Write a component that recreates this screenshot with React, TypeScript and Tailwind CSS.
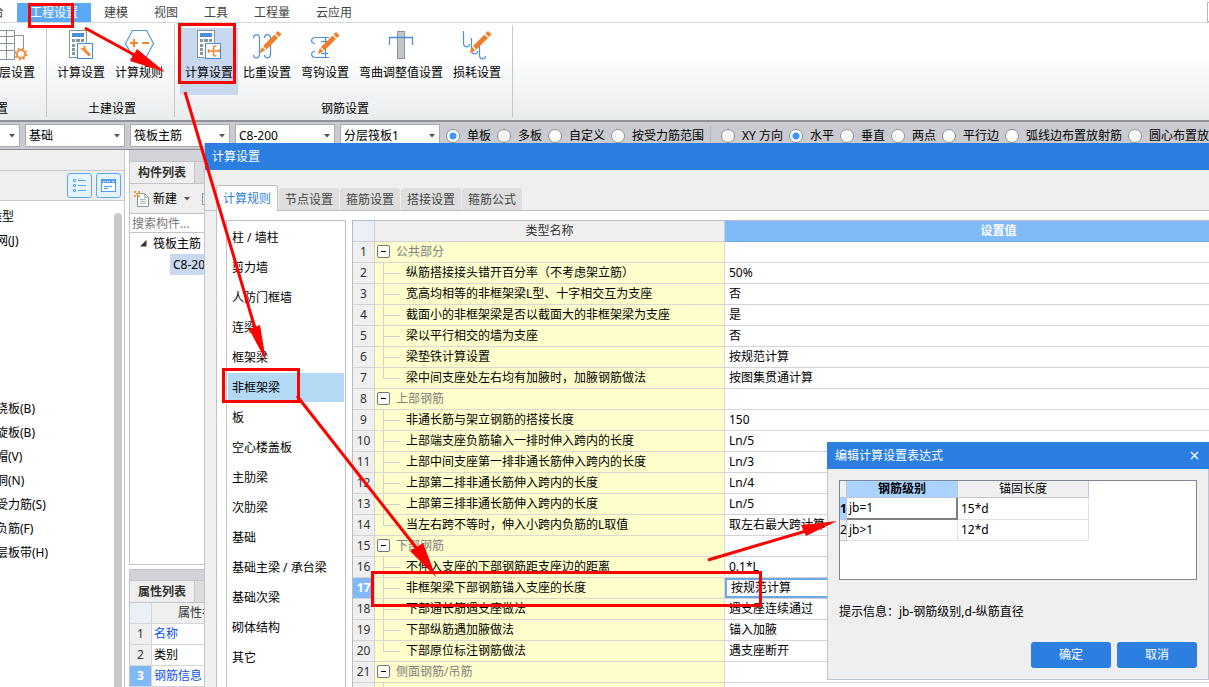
import { useState } from "react"
import type { ReactNode } from "react"

const menuTabs = ["台", "工程设置", "建模", "视图", "工具", "工程量", "云应用"]

const selects = [
  { label: "楼层", value: "基础" },
  { label: "构件类型", value: "筏板主筋" },
  { label: "构件", value: "C8-200" },
  { label: "分层", value: "分层筏板1" },
]

const rangeModes = ["单板", "多板", "自定义", "按受力筋范围"]
const layoutModes = ["XY 方向", "水平", "垂直", "两点", "平行边", "弧线边布置放射筋", "圆心布置放射筋"]

const navTop = ["网(J)"]
const navBottom = ["浇板(B)", "旋板(B)", "帽(V)", "洞(N)", "受力筋(S)", "负筋(F)", "层板带(H)"]

const dialogTabs = ["计算规则", "节点设置", "箍筋设置", "搭接设置", "箍筋公式"]

const categories = [
  "柱 / 墙柱",
  "剪力墙",
  "人防门框墙",
  "连梁",
  "框架梁",
  "非框架梁",
  "板",
  "空心楼盖板",
  "主肋梁",
  "次肋梁",
  "基础",
  "基础主梁 / 承台梁",
  "基础次梁",
  "砌体结构",
  "其它",
]

type Rule = { name: string; value?: string; group?: boolean; last?: boolean }

const rules: Rule[] = [
  { name: "公共部分", group: true },
  { name: "纵筋搭接接头错开百分率（不考虑架立筋）", value: "50%" },
  { name: "宽高均相等的非框架梁L型、十字相交互为支座", value: "否" },
  { name: "截面小的非框架梁是否以截面大的非框架梁为支座", value: "是" },
  { name: "梁以平行相交的墙为支座", value: "否" },
  { name: "梁垫铁计算设置", value: "按规范计算" },
  { name: "梁中间支座处左右均有加腋时，加腋钢筋做法", value: "按图集贯通计算", last: true },
  { name: "上部钢筋", group: true },
  { name: "非通长筋与架立钢筋的搭接长度", value: "150" },
  { name: "上部端支座负筋输入一排时伸入跨内的长度", value: "Ln/5" },
  { name: "上部中间支座第一排非通长筋伸入跨内的长度", value: "Ln/3" },
  { name: "上部第二排非通长筋伸入跨内的长度", value: "Ln/4" },
  { name: "上部第三排非通长筋伸入跨内的长度", value: "Ln/5" },
  { name: "当左右跨不等时，伸入小跨内负筋的L取值", value: "取左右最大跨计算", last: true },
  { name: "下部钢筋", group: true },
  { name: "不伸入支座的下部钢筋距支座边的距离", value: "0.1*L" },
  { name: "非框架梁下部钢筋锚入支座的长度", value: "按规范计算" },
  { name: "下部通长筋遇支座做法", value: "遇支座连续通过" },
  { name: "下部纵筋遇加腋做法", value: "锚入加腋" },
  { name: "下部原位标注钢筋做法", value: "遇支座断开", last: true },
  { name: "侧面钢筋/吊筋", group: true },
  { name: "", value: "" },
]

const EDITING_ROW = 17

function Pencil() {
  return (
    <g fill="#f07f2a">
      <path d="M12 17L23.500 5.500L27 9L15.500 20.500Z" />
      <path d="M24.500 4.500L27 2L30.500 5.500L28 8Z" />
      <path d="M11 18L14.500 21.500L8.500 24Z" />
    </g>
  )
}

function Calculator({ children }: { children: ReactNode }) {
  return (
    <svg width="32" height="32" viewBox="0 2 32 32" fill="none">
      <rect x="4.5" y="2.5" width="17" height="27" fill="#fff" stroke="#87949c" />
      <rect x="7" y="5" width="12" height="4" fill="#4a8fdc" />
      <g fill="#87949c">
        <rect x="7" y="11" width="3" height="3" />
        <rect x="11" y="11" width="4" height="3" />
        <rect x="16" y="11" width="3" height="3" />
        <rect x="7" y="16" width="3" height="3" />
        <rect x="7" y="20" width="3" height="3" />
        <rect x="7" y="24" width="3" height="3" />
      </g>
      <rect x="12.5" y="15.5" width="15" height="15" fill="#fff" stroke="#3f8fe0" />
      {children}
    </svg>
  )
}

function FloorIcon() {
  return (
    <svg width="32" height="32" viewBox="0 2 32 32" fill="none" stroke="#87949c">
      <path d="M0 2.5h15.5v29H0M0 8.5h15.5M0 15.5h15.5M0 22.5h15.5M7.5 2.5v29M15.5 7.5h9v14" fill="#fff" />
      <circle cx="22" cy="26" r="4" fill="#fff" stroke="#f0913c" strokeWidth="2" />
      <circle cx="22" cy="26" r="5.6" stroke="#f0913c" strokeWidth="1.6" strokeDasharray="2.2 2.2" />
    </svg>
  )
}

function WrenchCalcIcon() {
  return (
    <Calculator>
      <path d="M18 20.5L25 27.5" stroke="#f0862f" strokeWidth="2.6" />
      <path d="M15.2 19.5a3 3 0 0 0 5 1.800a3 3 0 0 0-1.800-4l.2 2.600-1.600.6z" fill="#f0862f" />
    </Calculator>
  )
}

function HookCalcIcon() {
  return (
    <Calculator>
      <path
        d="M15.500 21v4M15.500 23h11M26.500 21v3M23.500 18h-1a2 2 0 0 0-2 2v6a2 2 0 0 0 2 2h1"
        stroke="#f0862f"
        strokeWidth="1.5"
      />
    </Calculator>
  )
}

function HexIcon() {
  return (
    <svg width="32" height="32" viewBox="0 2 32 32" fill="none">
      <path d="M9.5 2.5h14L30.5 15.5l-7 13h-14L2.5 15.5z" fill="#fff" stroke="#5598de" strokeWidth="1.2" />
      <path d="M7 15h8M11 11v8M19 15h7" stroke="#f0862f" strokeWidth="2" />
      <path d="M7 30.5h18" stroke="#5598de" />
    </svg>
  )
}

function RatioIcon() {
  return (
    <svg width="32" height="32" viewBox="0 0 32 32" fill="none">
      <path
        d="M2.5 8c0-4 6-5 6 0v16c0 5-6 5-6 1M13.5 8c0-4 6-5 6 0v16c0 5-6 5-6 1"
        stroke="#4a8fdc"
        strokeWidth="1.2"
      />
      <g transform="translate(0 -1)">
        <Pencil />
      </g>
    </svg>
  )
}

function HookIcon() {
  return (
    <svg width="32" height="32" viewBox="0 0 32 32" fill="none">
      <path
        d="M20 7.5H6c-4 0-5 6 0 6M20 27.5H6c-4 0-5-6 0-6M16.5 8v20M12 11.5h7M12 23.5h7"
        stroke="#4a8fdc"
        strokeWidth="1.2"
      />
      <Pencil />
    </svg>
  )
}

function BendIcon() {
  return (
    <svg width="32" height="32" viewBox="0 0 32 32" fill="none">
      <rect x="12.5" y="1.5" width="7" height="27" fill="#c0c6ca" stroke="#87949c" />
      <path d="M4.5 15V7.5h23V15" stroke="#4a8fdc" strokeWidth="1.3" />
    </svg>
  )
}

function LossIcon() {
  return (
    <svg width="32" height="32" viewBox="0 0 32 32" fill="none">
      <path
        d="M2.5 1v12c0 5 6 5 6 1M10.5 8v12c0 5 6 5 6 1M18.5 16v9c0 5 6 5 6 1"
        stroke="#4a8fdc"
        strokeWidth="1.2"
      />
      <g transform="translate(0 -1)">
        <Pencil />
      </g>
    </svg>
  )
}

function RibbonGroup({ title, children }: { title: string; children: ReactNode }) {
  return (
    <div className="flex shrink-0 flex-col border-r border-[#c4c7ca] pl-[5px] pr-[6px] pt-[3px]">
      <div className="flex h-[67px] shrink-0">{children}</div>
      <div className="pl-1 pt-[6px] text-center leading-4">{title}</div>
    </div>
  )
}

function RibbonButton({ label, icon, active }: { label: string; icon: ReactNode; active?: boolean }) {
  return (
    <button className={`flex flex-col items-center px-[5px] pt-[2px] ${active ? "bg-[#c8d8ee]" : ""}`}>
      {icon}
      <span className="whitespace-nowrap leading-[22px]">{label}</span>
    </button>
  )
}

function Arrow() {
  return (
    <svg width="6" height="4" viewBox="0 0 6 4" className="pointer-events-none absolute right-1 top-[9px]">
      <path d="M0 0h6L3 3.5z" fill="#555" />
    </svg>
  )
}

function Radio({ name, label, checked, onChange }: {
  name: string
  label: string
  checked: boolean
  onChange: () => void
}) {
  return (
    <label className="flex shrink-0 items-center gap-[7px] whitespace-nowrap">
      <input
        type="radio"
        name={name}
        checked={checked}
        onChange={onChange}
        className="size-[14px] appearance-none rounded-full border border-[#8d8f92] bg-white checked:bg-[radial-gradient(circle,#3d97f5_3px,white_4px)]"
      />
      {label}
    </label>
  )
}

function TopBar() {
  const [range, setRange] = useState("单板")
  const [layout, setLayout] = useState("水平")

  return (
    <header>
      <nav className="flex h-[23px] items-end border-b border-[#d4d6d8] text-[#444]">
        {menuTabs.map((tab, i) => (
          <button
            key={tab}
            className={`h-[19px] shrink-0 whitespace-nowrap leading-5 ${
              i === 0 ? "-ml-2 pr-[13px]" : "px-[13px]"
            } ${tab === "工程设置" ? "bg-[#5aa8f8] text-white" : ""}`}
          >
            {tab}
          </button>
        ))}
        <span className="ml-auto h-5 w-[2px] border border-r-0 border-[#b4b6bb]" />
      </nav>
      <div className="flex h-[97px] bg-linear-to-b from-white from-30% to-[#e9eced] pb-[3px] pt-[2px]">
        <div className="flex w-[47px] shrink-0 flex-col overflow-hidden border-r border-[#c4c7ca] pt-[3px]">
          <button className="-ml-px flex h-[67px] shrink-0 flex-col items-start pt-[2px]">
            <FloorIcon />
            <span className="whitespace-nowrap leading-[22px]">层设置</span>
          </button>
          <div className="-ml-1 pt-[6px] leading-4">置</div>
        </div>
        <RibbonGroup title="土建设置">
          <RibbonButton label="计算设置" icon={<WrenchCalcIcon />} />
          <RibbonButton label="计算规则" icon={<HexIcon />} />
        </RibbonGroup>
        <RibbonGroup title="钢筋设置">
          <RibbonButton label="计算设置" icon={<HookCalcIcon />} active />
          <RibbonButton label="比重设置" icon={<RatioIcon />} />
          <RibbonButton label="弯钩设置" icon={<HookIcon />} />
          <RibbonButton label="弯曲调整值设置" icon={<BendIcon />} />
          <RibbonButton label="损耗设置" icon={<LossIcon />} />
        </RibbonGroup>
      </div>
      <div className="flex h-[30px] items-center gap-[6px] overflow-hidden border-b border-t-2 border-b-[#8a8d92] border-t-[#909398] bg-[#c9cbd0]">
        <div className="flex gap-[5px]">
          <div className="relative h-[23px] w-5 border border-l-0 border-[#a9abb0] bg-white">
            <Arrow />
          </div>
          {selects.map((s) => (
            <div key={s.label} className="relative h-[23px] w-[100px] border border-[#a9abb0] bg-white">
              <select aria-label={s.label} className="h-full w-full appearance-none bg-white pl-[3px] leading-5">
                <option>{s.value}</option>
              </select>
              <Arrow />
            </div>
          ))}
        </div>
        {rangeModes.map((m) => (
          <Radio key={m} name="range" label={m} checked={range === m} onChange={() => setRange(m)} />
        ))}
        <span className="mr-[2px] h-5 shrink-0 border-l border-[#b4b6bb] pl-[2px]" />
        {layoutModes.map((m) => (
          <Radio key={m} name="layout" label={m} checked={layout === m} onChange={() => setLayout(m)} />
        ))}
      </div>
    </header>
  )
}

function NavPane() {
  return (
    <aside className="flex w-[125px] shrink-0 flex-col overflow-hidden border-r border-[#c3c5c9] bg-[#efefef]">
      <div className="h-[21px] shrink-0 border-b border-[#c8cace]" />
      <div className="flex h-[30px] shrink-0 items-center justify-end gap-1 border-b border-[#c8cace] pr-[3px]">
        <button
          aria-label="列表"
          className="grid size-[25px] place-items-center rounded-[3px] border border-[#5aa8f5] bg-[#e6f2ff]"
        >
          <svg width="15" height="15" viewBox="0 0 15 15" fill="none" stroke="#5aa8f5">
            <path d="M1.5 1.5h2v2h-2zM1.5 6.5h2v2h-2zM1.5 11.5h2v2h-2zM6 2.5h8M6 7.5h8M6 12.5h8" />
          </svg>
        </button>
        <button
          aria-label="窗口"
          className="grid size-[25px] place-items-center rounded-[3px] border border-[#5aa8f5] bg-[#e6f2ff]"
        >
          <svg width="15" height="15" viewBox="0 0 15 15" fill="none" stroke="#4a9cf2">
            <rect x=".5" y="1.5" width="14" height="12" fill="#fff" />
            <path d="M1 2h13v3H1z" fill="#4a9cf2" stroke="none" />
            <path d="M2 3.5h2M5 3.5h2M8 3.5h1M11 3.5h2" stroke="#fff" />
            <path d="M3 8.5h8M3 10.5h4" />
          </svg>
        </button>
      </div>
      <div className="flex flex-1 justify-between bg-white pt-1">
        <ul className="leading-6">
          <li className="-ml-[10px]">类型</li>
          {navTop.map((n) => (
            <li key={n} className="-ml-1">{n}</li>
          ))}
          <li className="h-36" />
          {navBottom.map((n) => (
            <li key={n} className="-ml-1 whitespace-nowrap">
              {n}
            </li>
          ))}
        </ul>
        <div className="mr-[2px] mt-2 w-2 rounded-t-full bg-[#c9c9c9]" />
      </div>
    </aside>
  )
}

function PaneTabs({ title }: { title: string }) {
  return (
    <div className="flex h-[22px] border-b border-[#c0c3ca] bg-[#dcdcdc] leading-[21px]">
      <button className="w-[65px] border-r border-[#c0c3ca] bg-[#efefef] font-bold text-[#333]">{title}</button>
    </div>
  )
}

function ComponentPane() {
  return (
    <section className="flex w-[120px] shrink-0 flex-col pl-1">
      <div className="flex h-[415px] shrink-0 flex-col border border-t-0 border-[#c0c3ca] bg-white">
        <div className="h-3 border-b border-[#c0c3ca] bg-[#d2d4da]" />
        <PaneTabs title="构件列表" />
        <div className="flex h-[30px] items-center border-b border-[#c0c3ca] bg-[#efefef] pl-1">
          <svg width="16" height="16" viewBox="0 0 16 16" fill="none">
            <path d="M3.5 2.5h7l4 4v9h-11z" fill="#fff" stroke="#87949c" />
            <path d="M10.5 2.5v4h4M6 8.5h6M6 10.5h6M6 12.5h6" stroke="#a9b3ba" />
            <path d="M0 0h2v2H0zM4 0h2v2H4zM2 2h2v2H2zM0 4h2v2H0zM4 4h2v2H4z" fill="#f0a23c" />
          </svg>
          <button className="ml-[3px] flex items-center gap-[7px]">
            新建
            <svg width="6" height="4" viewBox="0 0 6 4">
              <path d="M0 0h6L3 3.5z" fill="#555" />
            </svg>
          </button>
          <span className="ml-3 h-3 w-3 border border-[#87949c] bg-white" />
        </div>
        <input
          aria-label="搜索构件"
          placeholder="搜索构件..."
          className="h-[19px] w-full border-b border-[#c0c3ca] pl-[2px] placeholder:text-[#777]"
        />
        <div className="flex h-[21px] items-center gap-[6px] pl-[10px]">
          <svg width="7" height="7" viewBox="0 0 7 7">
            <path d="M6.5 0v6.5H0z" fill="#333" />
          </svg>
          <span>筏板主筋</span>
        </div>
        <div className="ml-10 h-[21px] bg-[#c8d8f0] pl-[3px] leading-[21px]">C8-200</div>
      </div>
      <div className="mt-1 flex-1 border border-[#c0c3ca] bg-white">
        <div className="h-[11px] border-b border-[#c0c3ca] bg-[#d2d4da]" />
        <PaneTabs title="属性列表" />
        <table className="w-full border-separate border-spacing-0 whitespace-nowrap text-left">
          <thead>
            <tr className="h-[21px]">
              <th className="w-[22px] border-b border-r border-[#d4d6d8] bg-[#eaf0f8]" />
              <th className="border-b border-[#d4d6d8] bg-[#efefef] pl-[26px] font-normal text-[#333]">属性名称</th>
            </tr>
          </thead>
          <tbody>
            {["名称", "类别", "钢筋信息"].map((name, i) => (
              <tr key={name} className="h-[21px]">
                <td
                  className={`border-b border-r border-[#d4d6d8] text-center ${
                    i === 2 ? "bg-[#80b9f8] font-bold text-white" : "bg-[#efefef] text-[#333]"
                  }`}
                >
                  {i + 1}
                </td>
                <td className={`border-b border-[#d4d6d8] pl-[2px] ${i === 1 ? "" : "text-[#0a50f0]"}`}>{name}</td>
              </tr>
            ))}
          </tbody>
        </table>
      </div>
    </section>
  )
}

function RuleName({ rule }: { rule: Rule }) {
  if (rule.group) {
    return (
      <div className="flex h-5 items-center gap-[6px] pl-[2px] text-[#808080]">
        <button
          aria-label="折叠"
          className="mb-px grid size-[13px] place-items-center rounded-[2px] border border-[#777] bg-white"
        >
          <span className="h-px w-[5px] bg-black" />
        </button>
        {rule.name}
      </div>
    )
  }
  return (
    <div className="flex h-5 items-center gap-[6px] pl-2">
      <span className="flex h-full w-[17px] flex-col">
        <span className="h-[11px] border-b border-l border-[#d0d0d0]" />
        {!rule.last && <span className="flex-1 border-l border-[#d0d0d0]" />}
      </span>
      {rule.name}
    </div>
  )
}

function RuleTable() {
  return (
    <table className="w-[920px] shrink-0 table-fixed border-separate border-spacing-0 whitespace-nowrap border-l border-t border-[#b9bbc0] leading-5">
      <colgroup>
        <col className="w-[22px]" />
        <col className="w-[350px]" />
        <col />
      </colgroup>
      <thead>
        <tr>
          <th className="h-5 border-b border-r border-[#d0d2d6] bg-[#eaf0f8] p-0" />
          <th className="border-b border-r border-[#d0d2d6] bg-[#efefef] p-0 font-normal text-[#333]">类型名称</th>
          <th className="border-b border-[#6aa8ea] bg-[#80baf9] p-0 font-bold text-white">设置值</th>
        </tr>
      </thead>
      <tbody>
        {rules.map((rule, i) => (
          <tr key={i}>
            <td
              className={`h-[21px] border-b border-r border-[#d4d4d4] p-0 text-center ${
                i + 1 === EDITING_ROW ? "bg-[#80b9f8] font-bold text-white" : "bg-[#efefef] text-[#333]"
              }`}
            >
              {i + 1}
            </td>
            <td className="border-b border-r border-[#d8d8d4] bg-[#ffffcc] p-0">
              <RuleName rule={rule} />
            </td>
            <td className="border-b border-[#d4d4d4] p-0">
              {i + 1 === EDITING_ROW ? (
                <input
                  aria-label={rule.name}
                  defaultValue={rule.value}
                  className="block h-5 w-full border-2 border-[#6ba8e6] bg-white pl-1 outline-none"
                />
              ) : (
                <span className="pl-1">{rule.value}</span>
              )}
            </td>
          </tr>
        ))}
      </tbody>
    </table>
  )
}

function SettingsDialog() {
  const [category, setCategory] = useState("非框架梁")

  return (
    <div
      role="dialog"
      aria-label="计算设置"
      className="absolute bottom-0 left-[204px] right-0 top-[143px] flex flex-col overflow-hidden border-l border-[#c0c3d0] bg-[#efefef]"
    >
      <h1 className="h-[27px] shrink-0 bg-[#2c7fe0] pl-[7px] leading-[27px] text-white">计算设置</h1>
      <div className="flex h-[41px] shrink-0 items-end gap-px border-b border-[#c0c0c0] pl-[11px]">
        {dialogTabs.map((tab, i) => (
          <button
            key={tab}
            className={`shrink-0 whitespace-nowrap rounded-t-[3px] leading-6 ${
              i === 0
                ? "-mb-px h-[26px] w-[62px] border border-b-0 border-[#c0c0c0] bg-white text-[#2c7fe0]"
                : "h-[22px] w-[60px] bg-[#dedede] text-[#444]"
            }`}
          >
            {tab}
          </button>
        ))}
      </div>
      <div className="ml-[11px] flex flex-1 items-start gap-[6px] overflow-hidden border-l border-[#c0c0c8] bg-white pl-[9px] pt-[9px]">
        <ul className="h-full w-[120px] shrink-0 border border-b-0 border-[#c0c0c8] px-px pt-[2px]">
          {categories.map((c) => (
            <li key={c} className="h-[30px]">
              <button
                onClick={() => setCategory(c)}
                className={`h-[29px] w-full whitespace-nowrap pl-1 text-left ${c === category ? "bg-[#b3daf5]" : ""}`}
              >
                {c}
              </button>
            </li>
          ))}
        </ul>
        <RuleTable />
      </div>
    </div>
  )
}

function ExpressionDialog() {
  return (
    <div
      role="dialog"
      aria-label="编辑计算设置表达式"
      className="absolute left-[827px] right-0 top-[442px] border border-t-0 border-[#bcc3d2] bg-[#efefef]"
    >
      <div className="-mx-px flex h-[27px] items-center justify-between bg-[#2c7fe0] pl-2 pr-[10px] text-white">
        <h2>编辑计算设置表达式</h2>
        <button aria-label="关闭">
          <svg width="9" height="9" viewBox="0 0 9 9" stroke="#fff" strokeWidth="1.4">
            <path d="M1 1l7 7M8 1L1 8" />
          </svg>
        </button>
      </div>
      <div className="px-[11px] pt-[11px]">
        <div className="h-[100px] border border-[#7f8590] bg-white">
          <table className="w-[249px] table-fixed border-separate border-spacing-0 whitespace-nowrap">
            <colgroup>
              <col className="w-[7px]" />
              <col className="w-[111px]" />
              <col />
            </colgroup>
            <thead>
              <tr className="leading-4">
                <th className="h-[17px] border-b border-r border-[#c0c6d8] bg-[#efefef] p-0" />
                <th className="border-b border-r border-[#c0c6d8] bg-[#aad4ff] p-0 font-bold">钢筋级别</th>
                <th className="border-b border-r border-[#c0c6d8] bg-[#efefef] p-0 font-normal">锚固长度</th>
              </tr>
            </thead>
            <tbody className="leading-5">
              <tr>
                <td className="h-[21px] border-b border-r border-[#c0c6d8] bg-[#aad4ff] p-0 font-bold">1</td>
                <td className="border-b-2 border-r-2 border-[#808080] p-0 pl-[2px]">jb=1</td>
                <td className="border-b border-r border-[#e2e2e2] p-0 pl-[3px]">15*d</td>
              </tr>
              <tr>
                <td className="h-[21px] border-b border-r border-[#c0c6d8] bg-[#efefef] p-0">2</td>
                <td className="border-b border-r border-[#e2e2e2] p-0 pl-[2px]">jb&gt;1</td>
                <td className="border-b border-r border-[#e2e2e2] p-0 pl-[3px]">12*d</td>
              </tr>
            </tbody>
          </table>
        </div>
        <p className="pt-[21px] leading-[21px]">提示信息：jb-钢筋级别,d-纵筋直径</p>
      </div>
      <div className="flex justify-end gap-[6px] px-[11px] pb-[11px] pt-5 text-white">
        <button className="h-[26px] w-20 rounded-[3px] bg-[#2c7fe0]">确定</button>
        <button className="h-[26px] w-20 rounded-[3px] bg-[#2c7fe0]">取消</button>
      </div>
    </div>
  )
}

// Red guide marks drawn over the windows
function Annotations() {
  return (
    <svg className="pointer-events-none absolute inset-0 h-full w-full" fill="none" stroke="#ff0000" strokeWidth="3">
      <rect x="29.5" y="4.5" width="43" height="22" />
      <rect x="179.5" y="24.5" width="55" height="58" />
      <rect x="223.5" y="369.5" width="75" height="32" />
      <rect x="372.5" y="572.5" width="388" height="33" />
      <path d="M85 28L140 58M185 92L257 335M297 396L418 550M708 560L806 531" />
      <g fill="#ff0000" stroke="none">
        <path d="M165 72L130 61L137 49Z" />
        <path d="M266 361L249 329L260 325Z" />
        <path d="M436 577L410 551L423 543Z" />
        <path d="M837 521L806 536L801 525Z" />
      </g>
    </svg>
  )
}

export default function App() {
  return (
    <div className="relative flex h-screen flex-col overflow-hidden bg-white font-['Noto_Sans','Noto_Sans_CJK_SC',sans-serif] text-xs text-black">
      <TopBar />
      <main className="flex flex-1 overflow-hidden bg-white">
        <NavPane />
        <ComponentPane />
      </main>
      <SettingsDialog />
      <ExpressionDialog />
      <Annotations />
    </div>
  )
}
